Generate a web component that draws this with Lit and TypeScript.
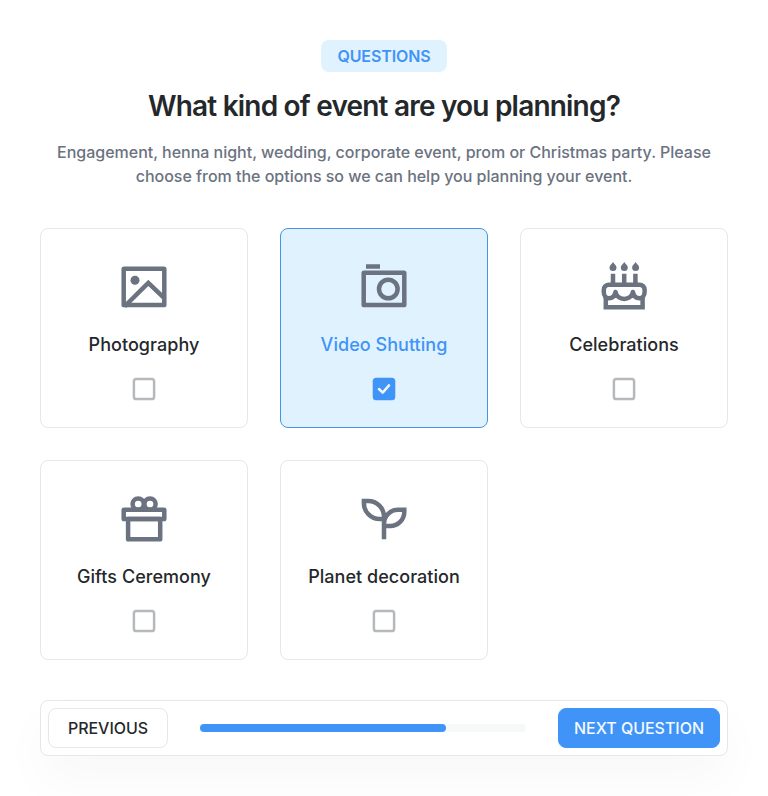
import { LitElement, html, svg, css } from "lit";
import { customElement, property, state } from "lit/decorators.js";
import { classMap } from "lit/directives/class-map.js";

const icons: Record<string, unknown> = {
  photo: svg`<rect x="3.7" y="4.7" width="40.6" height="36.4" rx="0.4"/><path d="M4.5 42.5 28.3 18.9 44 33.8"/><circle cx="15" cy="16.2" r="4.5" fill="currentColor" stroke="none"/>`,
  camera: svg`<rect x="3.7" y="8.7" width="40.6" height="32.4" rx="0.4"/><path d="M6 2.5h14"/><circle cx="28.3" cy="25" r="9.3"/>`,
  cake: svg`<path d="M13 9.8V20M24.2 9.8V20M35.4 9.8V20M5.8 32v11.2h36.8V32"/><path stroke-linejoin="round" d="M8.8 20.7h30.8a5 5 0 0 1 5 5v2.3c0 8.2-9.6 8.6-11.7 0-1.8 9.2-15.6 9.2-17.4 0C13.400 36.600 3.800 36.200 3.800 28v-2.300a5 5 0 0 1 5-5z"/><path d="M13-2c1.200 2 3.500 3.200 3.500 5.600a3.500 3.500 0 0 1-7 0c0-2.400 2.300-3.600 3.500-5.600zM24.300-2c1.200 2 3.500 3.200 3.500 5.600a3.500 3.500 0 0 1-7 0c0-2.400 2.300-3.600 3.500-5.600zM35.600-2c1.200 2 3.500 3.200 3.500 5.600a3.500 3.500 0 0 1-7 0c0-2.400 2.300-3.600 3.500-5.600z" fill="currentColor" stroke="none"/>`,
  gift: svg`<rect x="3.7" y="13.8" width="40.6" height="9.2" rx="0.3"/><rect x="8.1" y="23" width="32.1" height="20.3" rx="0.4"/><circle cx="18.2" cy="8" r="5.6"/><circle cx="30" cy="8" r="5.6"/>`,
  sprout: svg`<path d="M3.9 5.1h4.3C17 5.1 24 12 24 20.8v2.3h-4.3C11 23.1 3.9 16 3.9 7.3zM24 30v-2.2c0-7.7 6.3-14 14-14h6.3V16c0 7.7-6.3 14-14 14zM24 22v21.2"/>`,
};

@customElement("event-option")
export class EventOption extends LitElement {
  @property() label = "";
  @property() icon = "";
  @property({ type: Boolean, reflect: true }) selected = false;

  static styles = css`
    :host { display: block; }
    .card {
      box-sizing: border-box; width: 100%; height: 200px; padding: 35px 0 0;
      display: flex; flex-direction: column; align-items: center;
      border: 1px solid #e6e7e9; border-radius: 8px; background: #fff;
      color: #25282b; font: inherit; cursor: pointer;
    }
    .selected { background: #e1f2ff; border-color: #4495e4; }
    .icon { width: 48px; height: 48px; color: #6b7280; overflow: visible; flex: none; }
    .label { margin-top: 21px; font-size: 18px; line-height: 24px; font-weight: 500; letter-spacing: 0.04px; }
    .selected .label { color: #4094f7; }
    .box { width: 24px; height: 24px; margin-top: 20px; flex: none; }
  `;

  render() {
    return html`
      <button class=${classMap({ card: true, selected: this.selected })} role="checkbox" aria-checked=${String(this.selected)}>
        <svg class="icon" viewBox="0 0 48 48" fill="none" stroke="currentColor" stroke-width="4.5">${icons[this.icon]}</svg>
        <span class="label">${this.label}</span>
        ${this.selected
          ? html`<svg class="box" viewBox="0 0 24 24" fill="none"><rect x="0.7" y="0.7" width="22.6" height="22.6" rx="3.5" fill="#4094f7"/><path d="M7 12 10.7 15.6 17 8.4" stroke="#edf7ff" stroke-width="2.5" stroke-linecap="round" stroke-linejoin="round"/></svg>`
          : html`<svg class="box" viewBox="0 0 24 24" fill="none"><rect x="1.9" y="1.9" width="20.2" height="20.2" rx="2.4" stroke="#b5b9bb" stroke-width="2.5"/></svg>`}
      </button>`;
  }
}

@customElement("app-root")
export class AppRoot extends LitElement {
  @state() private chosen = "camera";

  private options = [
    { label: "Photography", icon: "photo" },
    { label: "Video Shutting", icon: "camera" },
    { label: "Celebrations", icon: "cake" },
    { label: "Gifts Ceremony", icon: "gift" },
    { label: "Planet decoration", icon: "sprout" },
  ];

  static styles = css`
    :host {
      display: block; box-sizing: border-box; height: 796px; padding: 40px; overflow: hidden;
      background: #fff; font-family: Inter, "Liberation Sans", sans-serif; color: #25282b;
    }
    header { display: flex; flex-direction: column; align-items: center; text-align: center; }
    .tag {
      width: 126px; height: 32px; border-radius: 8px; background: #e1f2ff; color: #4094f7;
      font-size: 16px; line-height: 32px; font-weight: 600; letter-spacing: -0.1px;
    }
    h1 { margin: 16px 0 0; font-size: 28px; line-height: 36px; font-weight: 600; letter-spacing: -0.8px; white-space: nowrap; }
    p { margin: 16px 0 0; font-size: 16px; line-height: 24px; font-weight: 500; color: #6b7280; white-space: nowrap; letter-spacing: -0.02px; }
    .grid { margin-top: 40px; display: grid; grid-template-columns: repeat(3, 1fr); gap: 32px; }
    footer {
      box-sizing: border-box; margin-top: 40px; height: 56px; padding: 7px;
      display: flex; align-items: center; border: 1px solid #e6e7e9; border-radius: 8px;
      background: #fff; box-shadow: 0 24px 48px rgba(0, 0, 0, 0.03);
    }
    .btn {
      box-sizing: border-box; height: 40px; padding: 0; border-radius: 8px;
      border: 1px solid #e6e7e9; background: #fff; color: #25282b;
      font: inherit; font-size: 16px; font-weight: 500; letter-spacing: -0.03px; white-space: nowrap; cursor: pointer;
    }
    .previous { width: 120px; }
    .next { width: 162px; border-color: #4094f7; background: #4094f7; color: #f4faff; }
    .track { flex: 1; height: 8px; margin: 0 32px; border-radius: 4px; background: #f7f8f8; }
    .fill { height: 8px; border-radius: 4px; background: #4094f7; }
  `;

  render() {
    return html`
      <header>
        <span class="tag">QUESTIONS</span>
        <h1>What kind of event are you planning?</h1>
        <p>Engagement, henna night, wedding, corporate event, prom or Christmas party. Please<br>choose from the options so we can help you planning your event.</p>
      </header>
      <div class="grid">
        ${this.options.map((o) => html`
          <event-option .label=${o.label} .icon=${o.icon} .selected=${o.icon === this.chosen}
            @click=${() => { this.chosen = o.icon; }}></event-option>`)}
      </div>
      <footer>
        <button class="btn previous">PREVIOUS</button>
        <div class="track"><div class="fill" style="width: 75.5%"></div></div>
        <button class="btn next">NEXT QUESTION</button>
      </footer>`;
  }
}
